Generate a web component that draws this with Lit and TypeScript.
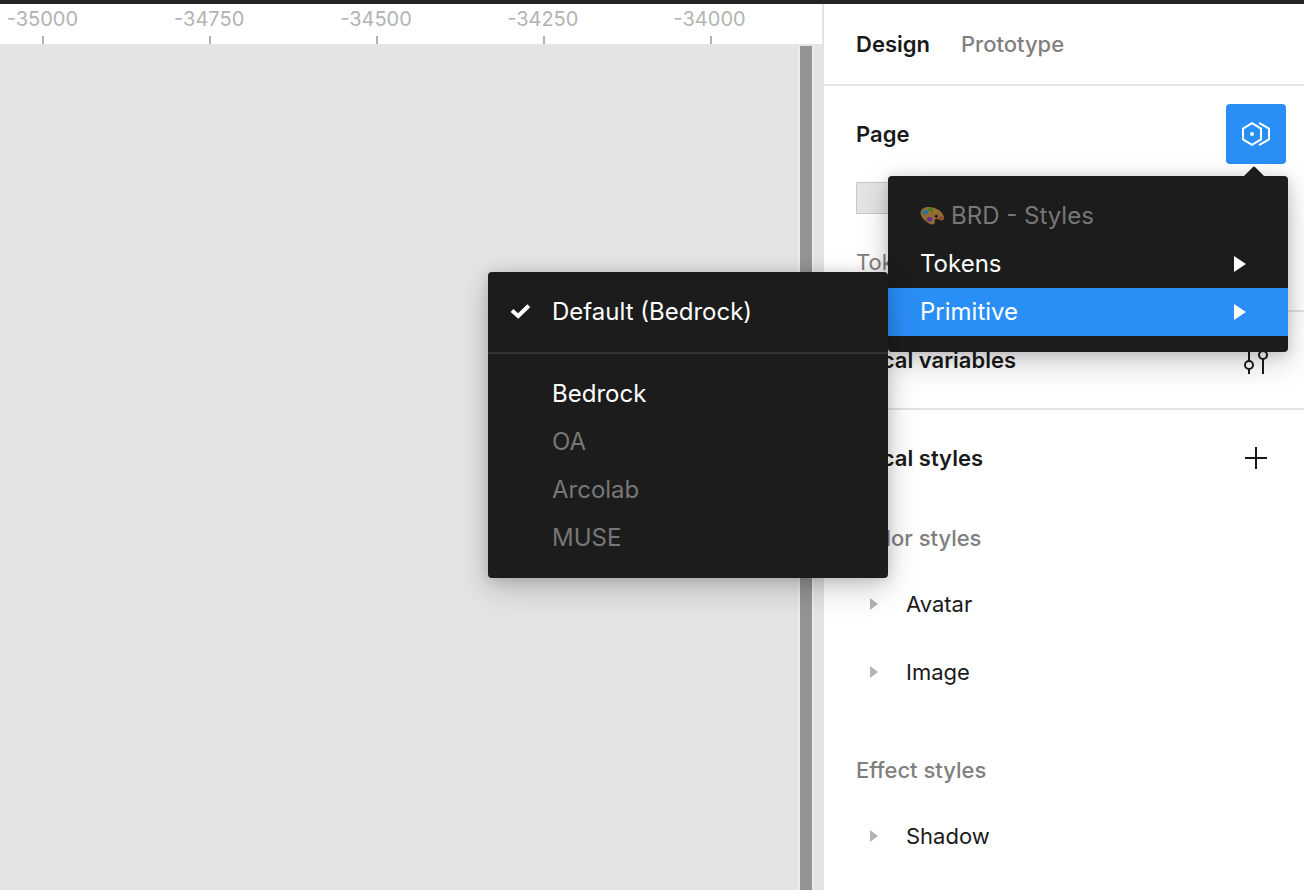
import { LitElement, html, css, svg, nothing } from "lit";
import { customElement, property } from "lit/decorators.js";

const paletteIcon = html`<svg class="palette" width="24" height="20" viewBox="0 0 24 20" aria-hidden="true">
  <path d="M.8 8.500C-.4 4 3 1 8.500 1c6.500 0 12.500 3.200 14.700 8 1.500 3.500.6 5.800-1.700 5.600-2.200-.2-3.300-2-5.300-1.700-2.200.3-.9 2.600-1.700 4.600C13 20.500 2.800 15.500.8 8.500Z" fill="#d3953a"/>
  <ellipse cx="16.300" cy="10.300" rx="1.600" ry="1.500" fill="#1c1c1c"/>
  <ellipse cx="10.500" cy="3.800" rx="2.600" ry="1.600" transform="rotate(20 10.500 3.800)" fill="#45ba35"/>
  <ellipse cx="5.300" cy="6.200" rx="2.600" ry="2.300" fill="#25a7ee"/>
  <ellipse cx="9.600" cy="13.200" rx="2.800" ry="2.300" fill="#8f35cf"/>
  <ellipse cx="20.800" cy="12.200" rx="1.800" ry="1.600" fill="#e84545"/>
  <ellipse cx="15.500" cy="5" rx="1.800" ry="1.200" transform="rotate(25 15.500 5)" fill="#ddab3c"/>
</svg>`;

const libraryIcon = html`<svg width="32" height="28" viewBox="0 0 32 28" fill="none" stroke="#fff" stroke-width="2" aria-hidden="true">
  <path d="M12 3.200 21 8.600v10.800L12 24.800 3 19.400V8.600Z"/>
  <path d="M19 2.800 29 8.600v10.800L19 25.200"/>
  <circle cx="12" cy="14" r="2" fill="#fff" stroke="none"/>
</svg>`;

const slidersIcon = html`<svg width="28" height="28" viewBox="0 0 28 28" fill="none" stroke="#1a1a1a" stroke-width="2" aria-hidden="true">
  <path d="M7 2v13M7 23v5M21 2v3M21 13v15"/>
  <circle cx="7" cy="19" r="4"/>
  <circle cx="21" cy="9" r="4"/>
</svg>`;

const plusIcon = html`<svg width="28" height="28" viewBox="0 0 28 28" stroke="#1a1a1a" stroke-width="2" aria-hidden="true">
  <path d="M14 3v22M3 14h22"/>
</svg>`;

const checkIcon = html`<svg width="24" height="18" viewBox="0 0 24 18" fill="none" stroke="#fff" stroke-width="4" aria-hidden="true">
  <path d="M4 7.400 10.200 13 20.800 2.800"/>
</svg>`;

const arrow = (w: number, h: number, color: string) =>
  html`<svg width=${w} height=${h} viewBox="0 0 12 16" preserveAspectRatio="none" aria-hidden="true">${svg`<path d="M0 0 12 8 0 16Z" fill=${color} />`}</svg>`;

@customElement("canvas-ruler")
class CanvasRuler extends LitElement {
  static styles = css`
    :host {
      display: block;
      background: #fff;
      border-bottom: 2px solid #e5e5e5;
      overflow: hidden;
    }
    .marks {
      display: flex;
      height: 40px;
      margin: 0 28px 0 -40px;
    }
    .mark {
      flex: 1;
      display: flex;
      flex-direction: column;
      align-items: center;
      justify-content: space-between;
      font-size: 20px;
      line-height: 30px;
      color: #b3b3b3;
    }
    .value {
      padding-right: 2px;
    }
    .tick {
      width: 2px;
      height: 8px;
      background: #b3b3b3;
    }
  `;
  render() {
    return html`<div class="marks">
      ${[-35000, -34750, -34500, -34250, -34000].map(
        (n) => html`<div class="mark"><span class="value">${n}</span><span class="tick"></span></div>`
      )}
    </div>`;
  }
}

@customElement("style-group")
class StyleGroup extends LitElement {
  @property() heading = "";
  @property({ attribute: false }) items: string[] = [];

  static styles = css`
    :host {
      display: block;
    }
    .heading {
      margin: 0;
      padding: 0 32px;
      font-size: 22px;
      font-weight: 500;
      line-height: 64px;
      color: #808080;
    }
    .item {
      display: flex;
      align-items: center;
      gap: 28px;
      width: 100%;
      height: 68px;
      padding: 0 46px;
      border: 0;
      background: none;
      font: inherit;
      font-size: 22px;
      color: #1a1a1a;
      text-align: left;
    }
  `;
  render() {
    return html`
      <h3 class="heading">${this.heading}</h3>
      ${this.items.map(
        (name) => html`<button class="item" aria-expanded="false">${arrow(8, 12, "#b3b3b3")}${name}</button>`
      )}
    `;
  }
}

@customElement("library-menu")
class LibraryMenu extends LitElement {
  static styles = css`
    :host {
      display: block;
    }
    .menu {
      box-sizing: border-box;
      width: 400px;
      padding: 16px 0;
      border-radius: 4px;
      background: #1c1c1c;
      box-shadow: 0 10px 32px rgba(0, 0, 0, 0.2), 0 2px 14px rgba(0, 0, 0, 0.15);
      color: #fff;
      font-size: 24px;
    }
    .pointer {
      position: absolute;
      right: 24px;
      bottom: 100%;
      display: block;
    }
    .row {
      box-sizing: border-box;
      display: flex;
      align-items: center;
      width: 100%;
      height: 48px;
      padding: 0 42px 0 32px;
      border: 0;
      background: none;
      color: inherit;
      font: inherit;
      text-align: left;
    }
    .label {
      flex: 1;
      padding-bottom: 2px;
    }
    .title {
      gap: 7px;
      color: #777;
    }
    .palette {
      opacity: 0.65;
    }
    .active {
      background: #2a8ef7;
    }
    .anchor {
      position: relative;
    }
    .submenu {
      position: absolute;
      top: -16px;
      right: 100%;
    }
    .option {
      padding-left: 20px;
    }
    .mark {
      flex: none;
      display: flex;
      align-items: center;
      width: 44px;
    }
    .option:disabled {
      color: #777;
    }
    .rule {
      height: 2px;
      margin: 16px 0;
      border: 0;
      background: #333;
    }
  `;

  private option(label: string, checked = false, disabled = false) {
    return html`<button class="row option" role="menuitemradio" aria-checked=${checked} ?disabled=${disabled}>
      <span class="mark">${checked ? checkIcon : nothing}</span><span class="label">${label}</span>
    </button>`;
  }

  render() {
    return html`<div class="menu" role="menu">
      <svg class="pointer" width="20" height="10" viewBox="0 0 20 10" aria-hidden="true">
        <path d="M0 10 9 1q1-1 2 0l9 9Z" fill="#1c1c1c" />
      </svg>
      <div class="row title">${paletteIcon}<span class="label">BRD - Styles</span></div>
      <button class="row" role="menuitem"><span class="label">Tokens</span>${arrow(12, 16, "#fff")}</button>
      <div class="anchor">
        <button class="row active" role="menuitem" aria-expanded="true">
          <span class="label">Primitive</span>${arrow(12, 16, "#fff")}
        </button>
        <div class="menu submenu" role="menu">
          ${this.option("Default (Bedrock)", true)}
          <hr class="rule" />
          ${this.option("Bedrock")} ${this.option("OA", false, true)} ${this.option("Arcolab", false, true)}
          ${this.option("MUSE", false, true)}
        </div>
      </div>
    </div>`;
  }
}

@customElement("app-root")
class AppRoot extends LitElement {
  static styles = css`
    :host {
      display: flex;
      flex-direction: column;
      box-sizing: border-box;
      min-height: 100vh;
      border-top: 4px solid #232323;
      background: #fff;
      font-family: Inter, "Liberation Sans", sans-serif;
      font-size: 22px;
      color: #1a1a1a;
    }
    .workspace {
      flex: 1;
      display: flex;
    }
    .canvas {
      flex: 1;
      min-width: 0;
      display: flex;
      flex-direction: column;
      background: #e4e4e4;
    }
    .stage {
      flex: 1;
      display: flex;
      justify-content: flex-end;
      padding-right: 8px;
    }
    .scrollbar {
      width: 12px;
      background: #949494;
      border: solid #ececec;
      border-width: 0 2px;
    }
    .panel {
      flex: none;
      width: 480px;
      border-left: 2px solid #e3e3e3;
      background: #fff;
    }
    .tabs {
      display: flex;
      align-items: center;
      gap: 31px;
      height: 80px;
      padding: 0 32px;
      border-bottom: 2px solid #e3e3e3;
    }
    .tab {
      padding: 0;
      border: 0;
      background: none;
      font: inherit;
      font-weight: 500;
      color: #808080;
    }
    .selected {
      font-weight: 600;
      color: #1a1a1a;
    }
    .section {
      border-bottom: 2px solid #e3e3e3;
    }
    .section:last-child {
      border-bottom: 0;
    }
    .bar {
      display: flex;
      align-items: center;
      justify-content: space-between;
      height: 96px;
      padding: 0 18px 0 32px;
    }
    .title {
      margin: 0;
      font-size: 22px;
      font-weight: 600;
    }
    .tool {
      display: flex;
      align-items: center;
      justify-content: center;
      width: 60px;
      height: 60px;
      padding: 0;
      border: 0;
      border-radius: 4px;
      background: none;
    }
    .on {
      background: #2a8ef7;
    }
    .holder {
      position: relative;
      z-index: 1;
    }
    .popup {
      position: absolute;
      top: 72px;
      right: -2px;
    }
    .swatch {
      display: block;
      box-sizing: border-box;
      width: 34px;
      height: 32px;
      margin-left: 32px;
      padding: 0;
      border: 1px solid #c8c8c8;
      background: #e4e4e4;
    }
    .caption {
      margin: 0;
      padding: 0 32px;
      line-height: 96px;
      color: #808080;
    }
    .groups {
      display: flex;
      flex-direction: column;
      gap: 32px;
      padding-bottom: 16px;
    }
  `;

  render() {
    return html`<div class="workspace">
      <main class="canvas">
        <canvas-ruler></canvas-ruler>
        <div class="stage"><div class="scrollbar"></div></div>
      </main>
      <aside class="panel">
        <nav class="tabs">
          <button class="tab selected">Design</button>
          <button class="tab">Prototype</button>
        </nav>
        <section class="section">
          <div class="bar">
            <h2 class="title">Page</h2>
            <div class="holder">
              <button class="tool on" aria-label="Change variable mode">${libraryIcon}</button>
              <library-menu class="popup"></library-menu>
            </div>
          </div>
          <button class="swatch" aria-label="Page color"></button>
          <p class="caption">Tokens</p>
        </section>
        <section class="section">
          <div class="bar">
            <h2 class="title">Local variables</h2>
            <button class="tool" aria-label="Open variables">${slidersIcon}</button>
          </div>
        </section>
        <section class="section">
          <div class="bar">
            <h2 class="title">Local styles</h2>
            <button class="tool" aria-label="Create style">${plusIcon}</button>
          </div>
          <div class="groups">
            <style-group heading="Color styles" .items=${["Avatar", "Image"]}></style-group>
            <style-group heading="Effect styles" .items=${["Shadow"]}></style-group>
          </div>
        </section>
      </aside>
    </div>`;
  }
}
